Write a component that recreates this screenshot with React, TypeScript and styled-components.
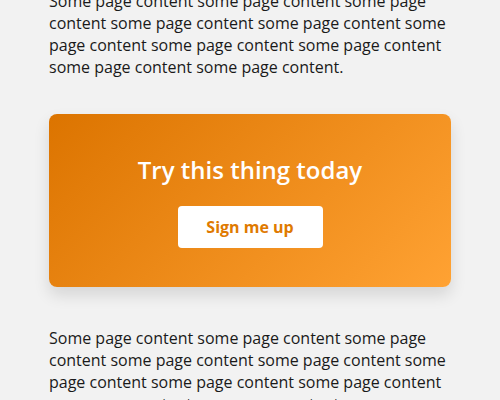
import styled, { createGlobalStyle } from 'styled-components';

const GlobalStyle = createGlobalStyle`
  html, body {
    margin: 0;
    padding: 0;
    background: #f2f2f2;
  }
  body {
    font-family: 'Open Sans', 'Noto Sans', sans-serif;
    color: #1a1a1a;
    overflow: hidden;
  }
`;

const Page = styled.main`
  width: 402px;
  margin: -10px auto 0;
`;

const Text = styled.p`
  margin: 0;
  font-size: 16px;
  line-height: 22px;
`;

const Card = styled.section`
  margin: 36px 0 40px;
  padding: 40px 20px 39px;
  border-radius: 8px;
  background: linear-gradient(135deg, #dc7400 0%, #ffa233 100%);
  box-shadow: 0 8px 16px rgba(0, 0, 0, 0.12);
  display: flex;
  flex-direction: column;
  align-items: center;
  gap: 20px;
`;

const Title = styled.h2`
  margin: 0;
  font-size: 24px;
  line-height: 32px;
  font-weight: 600;
  color: #ffffff;
`;

const Button = styled.button`
  width: 145px;
  height: 42px;
  border: none;
  border-radius: 4px;
  background: #ffffff;
  color: #df7a00;
  font-family: inherit;
  font-size: 16px;
  font-weight: 700;
  cursor: pointer;
`;

const filler =
  'Some page content some page content some page content some page content some page content some page content some page content some page content some page content some page content.';

const App = () => {
  return (
    <>
      <GlobalStyle />
      <Page>
        <Text>{filler}</Text>
        <Card>
          <Title>Try this thing today</Title>
          <Button>Sign me up</Button>
        </Card>
        <Text>{filler}</Text>
      </Page>
    </>
  );
};

export default App;
